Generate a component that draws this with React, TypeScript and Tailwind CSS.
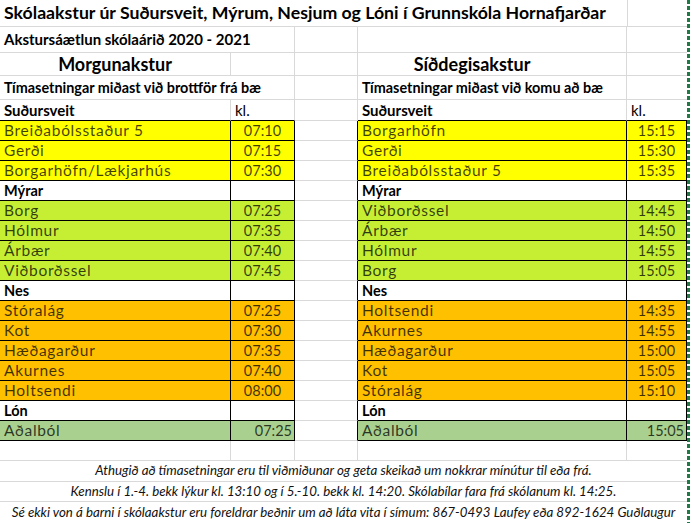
import React from "react";

type Fill = "y" | "l" | "o" | "g" | "h";

interface Line {
  name: string;
  time?: string;
  fill: Fill;
  end?: boolean;
}

const morning: Line[] = [
  { name: "Breiðabólsstaður 5", time: "07:10", fill: "y" },
  { name: "Gerði", time: "07:15", fill: "y" },
  { name: "Borgarhöfn/Lækjarhús", time: "07:30", fill: "y" },
  { name: "Mýrar", fill: "h" },
  { name: "Borg", time: "07:25", fill: "l" },
  { name: "Hólmur", time: "07:35", fill: "l" },
  { name: "Árbær", time: "07:40", fill: "l" },
  { name: "Viðborðssel", time: "07:45", fill: "l" },
  { name: "Nes", fill: "h" },
  { name: "Stóralág", time: "07:25", fill: "o" },
  { name: "Kot", time: "07:30", fill: "o" },
  { name: "Hæðagarður", time: "07:35", fill: "o" },
  { name: "Akurnes", time: "07:40", fill: "o" },
  { name: "Holtsendi", time: "08:00", fill: "o" },
  { name: "Lón", fill: "h" },
  { name: "Aðalból", time: "07:25", fill: "g", end: true },
];

const afternoon: Line[] = [
  { name: "Borgarhöfn", time: "15:15", fill: "y" },
  { name: "Gerði", time: "15:30", fill: "y" },
  { name: "Breiðabólsstaður 5", time: "15:35", fill: "y" },
  { name: "Mýrar", fill: "h" },
  { name: "Viðborðssel", time: "14:45", fill: "l" },
  { name: "Árbær", time: "14:50", fill: "l" },
  { name: "Hólmur", time: "14:55", fill: "l" },
  { name: "Borg", time: "15:05", fill: "l" },
  { name: "Nes", fill: "h" },
  { name: "Holtsendi", time: "14:35", fill: "o" },
  { name: "Akurnes", time: "14:55", fill: "o" },
  { name: "Hæðagarður", time: "15:00", fill: "o" },
  { name: "Kot", time: "15:05", fill: "o" },
  { name: "Stóralág", time: "15:10", fill: "o" },
  { name: "Lón", fill: "h" },
  { name: "Aðalból", time: "15:05", fill: "g", end: true },
];

const fills: Record<Fill, string> = {
  y: "bg-[#ffff00]",
  l: "bg-[#c6ef34]",
  o: "bg-[#ffc000]",
  g: "bg-[#a9d08e]",
  h: "bg-white",
};

function DataCells({ line, nameW, timeW }: { line: Line; nameW: string; timeW: string }) {
  const heading = line.fill === "h";
  return (
    <>
      <div
        className={`${nameW} ${fills[line.fill]} h-full flex items-center pl-[4px] border-r border-b border-black whitespace-nowrap ${
          heading ? "font-bold text-black text-[14.5px]" : "text-black/75 text-[15.5px] tracking-[0.7px]"
        }`}
      >
        {line.name}
      </div>
      <div
        className={`${timeW} ${fills[line.fill]} h-full flex items-center border-r border-b border-black text-black/75 text-[14.5px] ${
          line.end ? "justify-end pr-[2px]" : "justify-center"
        }`}
      >
        {line.time}
      </div>
    </>
  );
}

export default function App() {
  const grid = "border-[#d9d9d9]";
  return (
    <div className="w-[692px] h-[523px] flex bg-white text-[14px] font-['Lato',sans-serif] text-black overflow-hidden">
      <div className="w-[687px] flex flex-col">
        {/* title */}
        <div className={`h-[27px] flex border-b ${grid}`}>
          <div className="w-[627px] flex items-center pl-[4px] text-[17.7px] font-bold whitespace-nowrap">
            Skólaakstur úr Suðursveit, Mýrum, Nesjum og Lóni í Grunnskóla Hornafjarðar
          </div>
          <div className={`w-[60px] border-l ${grid}`} />
        </div>
        {/* year */}
        <div className="h-[26px] flex">
          <div className={`w-[295px] flex items-center pl-[4px] text-[15px] font-bold border-r border-b ${grid} whitespace-nowrap`}>
            Akstursáætlun skólaárið 2020 - 2021
          </div>
          <div className={`w-[63px] border-r border-b ${grid}`} />
          <div className={`w-[269px] border-r border-b ${grid}`} />
          <div className={`w-[60px] border-b ${grid}`} />
        </div>
        {/* section titles */}
        <div className="h-[23px] flex">
          <div className={`w-[231px] flex items-center justify-center text-[18px] font-bold border-r border-b ${grid}`}>
            Morgunakstur
          </div>
          <div className={`w-[64px] border-r border-b ${grid}`} />
          <div className={`w-[63px] border-r border-b ${grid}`} />
          <div className={`w-[269px] flex items-center justify-center pr-[40px] text-[18px] font-bold border-r border-b ${grid}`}>
            Síðdegisakstur
          </div>
          <div className={`w-[60px] border-b ${grid}`} />
        </div>
        {/* notes */}
        <div className="h-[24px] flex">
          <div className={`w-[295px] flex items-center pl-[4px] text-[14.4px] font-bold border-r border-b ${grid} whitespace-nowrap`}>
            Tímasetningar miðast við brottför frá bæ
          </div>
          <div className={`w-[63px] border-r border-b ${grid}`} />
          <div className={`w-[269px] flex items-center pl-[4px] text-[14.4px] font-bold border-r border-b ${grid} whitespace-nowrap`}>
            Tímasetningar miðast við komu að bæ
          </div>
          <div className={`w-[60px] border-b ${grid}`} />
        </div>
        {/* first heading */}
        <div className="h-[21px] flex">
          <div className={`w-[231px] flex items-center pl-[4px] text-[15px] font-bold border-r border-b ${grid} border-b-black`}>
            Suðursveit
          </div>
          <div className={`w-[64px] flex items-center pl-[4px] text-[15px] border-r border-b ${grid} border-b-black`}>kl.</div>
          <div className={`w-[63px] border-r border-b ${grid}`} />
          <div className={`w-[269px] flex items-center pl-[4px] text-[15px] font-bold border-r border-b ${grid} border-b-black`}>
            Suðursveit
          </div>
          <div className={`w-[60px] flex items-center pl-[4px] text-[15px] border-b ${grid} border-b-black`}>kl.</div>
        </div>
        {/* stops */}
        {morning.map((m, i) => (
          <div key={i} className="h-[20px] flex">
            <DataCells line={m} nameW="w-[231px]" timeW="w-[64px]" />
            <div className={`w-[63px] h-full border-r border-b ${grid} border-r-black`} />
            <DataCells line={afternoon[i]} nameW="w-[269px]" timeW="w-[60px]" />
          </div>
        ))}
        {/* spacer row */}
        <div className="h-[20px] flex">
          <div className={`w-[231px] border-r border-b ${grid}`} />
          <div className={`w-[64px] border-r border-b ${grid}`} />
          <div className={`w-[63px] border-r border-b ${grid}`} />
          <div className={`w-[269px] border-r border-b ${grid}`} />
          <div className={`w-[60px] border-b ${grid}`} />
        </div>
        {/* footer */}
        <div className="flex flex-col italic text-[13.3px] text-[#111]">
          <div className={`h-[21px] flex items-center justify-center border-b ${grid} whitespace-nowrap`}>
            Athugið að tímasetningar eru til viðmiðunar og geta skeikað um nokkrar mínútur til eða frá.
          </div>
          <div className={`h-[20px] flex items-center justify-center border-b ${grid} whitespace-nowrap`}>
            Kennslu í 1.-4. bekk lýkur kl. 13:10 og í 5.-10. bekk kl. 14:20. Skólabílar fara frá skólanum kl. 14:25.
          </div>
          <div className="h-[21px] flex items-center justify-center whitespace-nowrap">
            Sé ekki von á barni í skólaakstur eru foreldrar beðnir um að láta vita í símum: 867-0493 Laufey eða 892-1624 Guðlaugur
          </div>
        </div>
      </div>
      <div className="w-[3px] h-full bg-[repeating-linear-gradient(to_bottom,#1f7a45_0px,#1f7a45_4px,transparent_4px,transparent_6px)]" />
    </div>
  );
}
